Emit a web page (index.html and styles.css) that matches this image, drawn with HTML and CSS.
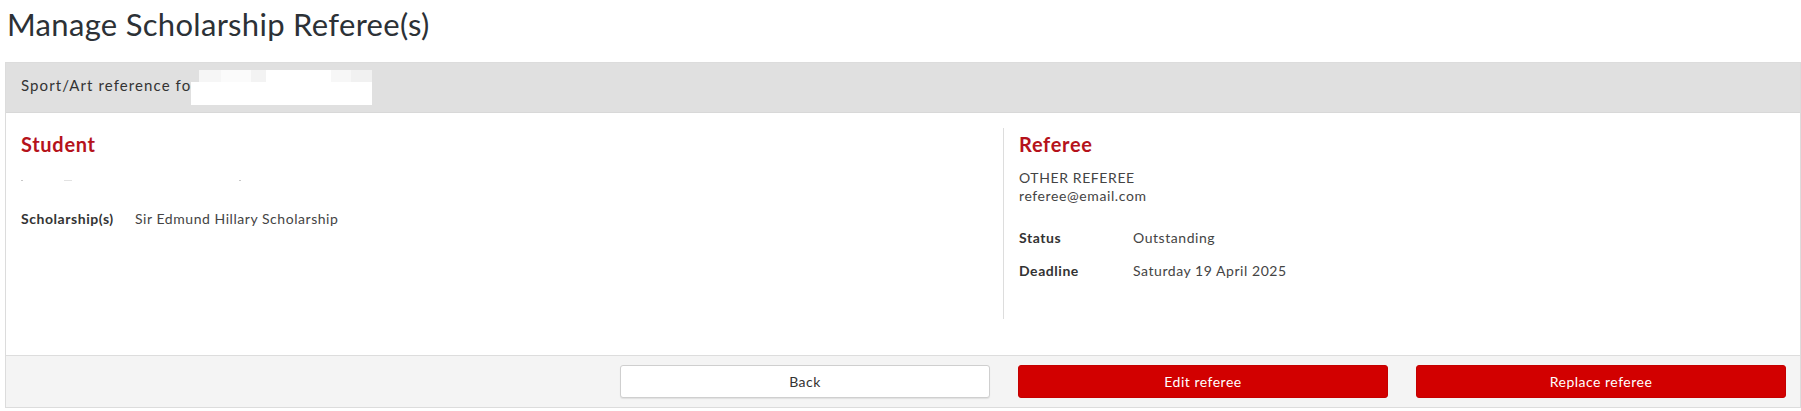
FILE: index.html
```html
<!DOCTYPE html>
<html lang="en">
<head>
<meta charset="utf-8">
<title>Manage Scholarship Referee(s)</title>
<link rel="stylesheet" href="styles.css">
</head>
<body>
<div class="page">
  <h1 class="title">Manage Scholarship Referee(s)</h1>
  <div class="panel">
    <div class="panel-head">
      <span class="head-text">Sport/Art reference for</span><span class="redact"></span>
    </div>
    <div class="panel-body">
      <div class="col col-left">
        <h2 class="section-title">Student</h2>
        <div class="name-line"><span class="speck s1"></span><span class="speck s2"></span><span class="speck s3"></span></div>
        <div class="detail-row">
          <span class="label">Scholarship(s)</span>
          <span class="value">Sir Edmund Hillary Scholarship</span>
        </div>
      </div>
      <div class="col col-right">
        <h2 class="section-title">Referee</h2>
        <div class="contact">
          <div>OTHER REFEREE</div>
          <div>referee@email.com</div>
        </div>
        <div class="rows">
          <div class="detail-row">
            <span class="label">Status</span>
            <span class="value">Outstanding</span>
          </div>
          <div class="detail-row">
            <span class="label">Deadline</span>
            <span class="value">Saturday 19 April 2025</span>
          </div>
        </div>
      </div>
    </div>
    <div class="panel-foot">
      <button class="btn btn-default">Back</button>
      <button class="btn btn-primary">Edit referee</button>
      <button class="btn btn-primary">Replace referee</button>
    </div>
  </div>
</div>
</body>
</html>
```

FILE: styles.css
```css
* { box-sizing: border-box; }

html, body {
  margin: 0;
  padding: 0;
  background: #ffffff;
}

body {
  font-family: Lato, "Open Sans", "Liberation Sans", sans-serif;
  color: #333333;
  font-size: 14px;
  line-height: 18px;
  letter-spacing: 0.5px;
}

.page {
  padding: 6px 0 0 5px;
}

.title {
  margin: 0 0 20px 2px;
  font-size: 31px;
  line-height: 36px;
  font-weight: 400;
  letter-spacing: 0.3px;
  color: #2c3136;
}

.panel {
  border: 1px solid #dcdcdc;
  background: #ffffff;
}

.panel-head {
  height: 50px;
  background: #e0e0e0;
  border-bottom: 1px solid #d8d8d8;
  padding: 12px 15px 0 15px;
  display: flex;
  align-items: flex-start;
  font-size: 15px;
  line-height: 20px;
  letter-spacing: 1.1px;
  color: #333333;
}

.redact {
  display: inline-block;
  width: 181px;
  height: 35px;
  margin-left: -7px;
  margin-top: -5px;
  background:
    linear-gradient(90deg, rgba(255,255,255,0) 0, rgba(255,255,255,0) 8px, #f6f6f6 8px, #f6f6f6 30px, #fbfbfb 30px, #fbfbfb 60px, #f3f3f3 60px, #f3f3f3 75px, #ffffff 75px, #ffffff 140px, #f7f7f7 140px, #f7f7f7 160px, #f1f1f1 160px, #f1f1f1 181px) top / 100% 12px no-repeat,
    linear-gradient(90deg, #ffffff 0, #ffffff 181px) bottom / 100% 23px no-repeat;
}

.panel-body {
  display: flex;
  padding: 15px 15px 36px 15px;
}

.col {
  padding-top: 5px;
}

.col-left {
  width: 982px;
  flex: none;
}

.col-right {
  flex: 1;
  border-left: 1px solid #dddddd;
  padding-left: 15px;
  padding-bottom: 39px;
}

.section-title {
  margin: 0 0 14px 0;
  font-size: 20px;
  line-height: 22px;
  font-weight: 700;
  letter-spacing: 0.7px;
  color: #b5121b;
}

.name-line {
  height: 18px;
  position: relative;
  margin-bottom: 23px;
}

.speck {
  position: absolute;
  top: 11px;
  height: 1px;
  background: #c8c8c8;
}
.s1 { left: 0; width: 2px; }
.s2 { left: 43px; width: 8px; background: #e2e2e2; }
.s3 { left: 218px; width: 2px; }

.detail-row {
  display: flex;
}

.label {
  width: 114px;
  font-weight: 700;
  letter-spacing: 0.55px;
  color: #333333;
  flex: none;
}

.value {
  color: #444444;
  letter-spacing: 0.55px;
}

.contact {
  color: #444444;
  letter-spacing: 0.6px;
  margin-bottom: 24px;
}

.rows {
  display: flex;
  flex-direction: column;
  gap: 15px;
}

.panel-foot {
  display: flex;
  justify-content: flex-end;
  gap: 28px;
  background: #f4f4f4;
  border-top: 1px solid #dddddd;
  padding: 9px 14px 9px 14px;
}

.btn {
  width: 370px;
  height: 33px;
  border-radius: 3px;
  font-family: Lato, "Open Sans", "Liberation Sans", sans-serif;
  font-size: 14px;
  line-height: 18px;
  letter-spacing: 0.5px;
  cursor: pointer;
  padding: 0;
}

.btn-default {
  background: #ffffff;
  border: 1px solid #cfcfcf;
  color: #333333;
  box-shadow: 0 1px 1px rgba(0,0,0,0.08);
}

.btn-primary {
  background: #d20000;
  border: 1px solid #c40000;
  color: #ffffff;
}
```
